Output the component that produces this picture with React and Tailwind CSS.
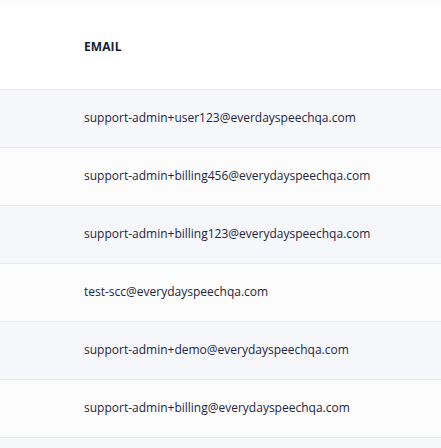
const EMAILS = [
  'support-admin+user123@everdayspeechqa.com',
  'support-admin+billing456@everydayspeechqa.com',
  'support-admin+billing123@everydayspeechqa.com',
  'test-scc@everydayspeechqa.com',
  'support-admin+demo@everydayspeechqa.com',
  'support-admin+billing@everydayspeechqa.com',
  '',
]

export default function App() {
  return (
    <div className="w-[441px] h-[448px] overflow-hidden bg-[#fafbfc] pt-[6px]" style={{ fontFamily: '"Open Sans", sans-serif' }}>
      <table className="w-full border-collapse">
        <thead>
          <tr className="bg-white border-b border-[#e6e8ee]">
            <th className="h-[83px] pl-[84px] text-left text-[12px] font-bold text-[#141c33] tracking-[0.1px]">EMAIL</th>
          </tr>
        </thead>
        <tbody>
          {EMAILS.map((e, i) => (
            <tr key={i} className={`border-b border-[#e9ebf0] ${i % 2 === 0 ? 'bg-[#f6f7fb]' : 'bg-[#fcfcfd]'}`}>
              <td className="h-[58px] pl-[84px] text-[12px] text-[#1c2540]">{e}</td>
            </tr>
          ))}
        </tbody>
      </table>
    </div>
  )
}
